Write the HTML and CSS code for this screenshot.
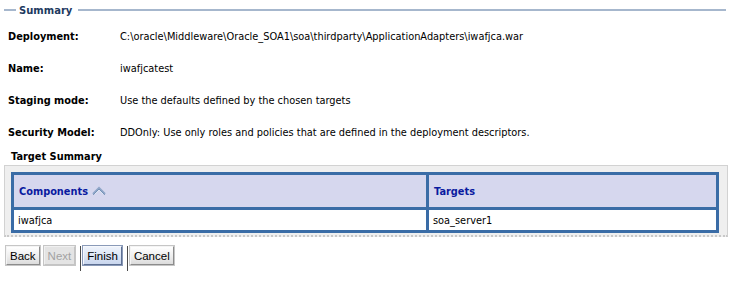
FILE: index.html
```html
<!DOCTYPE html>
<html>
<head>
<meta charset="utf-8">
<link rel="stylesheet" href="styles.css">
</head>
<body>
<div class="legend">
  <span class="rule short"></span>
  <span class="legend-text">Summary</span>
  <span class="rule long"></span>
</div>
<div class="details">
  <div class="label">Deployment:</div><div class="value">C:\oracle\Middleware\Oracle_SOA1\soa\thirdparty\ApplicationAdapters\iwafjca.war</div>
  <div class="label">Name:</div><div class="value">iwafjcatest</div>
  <div class="label">Staging mode:</div><div class="value">Use the defaults defined by the chosen targets</div>
  <div class="label">Security Model:</div><div class="value">DDOnly: Use only roles and policies that are defined in the deployment descriptors.</div>
</div>
<div class="subhead">Target Summary</div>
<div class="box">
  <table class="grid">
    <thead>
      <tr>
        <th class="c1">Components <svg class="sort" width="14" height="10" viewBox="0 0 14 10"><path d="M1 8 L7 2 L13 8" fill="none" stroke="#8fa6c8" stroke-width="2"/><path d="M3 8 L7 4 L11 8" fill="none" stroke="#dde6f3" stroke-width="1"/><path d="M1 9 L7 3 L13 9" fill="none" stroke="#5f7fa8" stroke-width="1" opacity="0.6"/></svg></th>
        <th class="c2">Targets</th>
      </tr>
    </thead>
    <tbody>
      <tr><td>iwafjca</td><td>soa_server1</td></tr>
    </tbody>
  </table>
</div>
<div class="buttons">
  <button class="btn">Back</button>
  <button class="btn disabled">Next</button>
  <span class="sep"></span>
  <button class="btn primary">Finish</button>
  <span class="sep"></span>
  <button class="btn">Cancel</button>
</div>
</body>
</html>
```
FILE: styles.css
```css
html, body {
  margin: 0;
  padding: 0;
  background: #ffffff;
}
body {
  font-family: "DejaVu Sans", Verdana, sans-serif;
  font-size: 9.8px;
  color: #000;
  padding: 0 4px 0 4px;
}
.legend {
  display: flex;
  align-items: center;
  height: 20px;
  width: 722px;
}
.rule {
  height: 2px;
  background: #a6b7cd;
}
.rule.short { width: 12px; }
.rule.long { flex: 1; }
.legend-text {
  font-weight: bold;
  font-size: 10px;
  color: #1e3a5f;
  padding: 0 6px 0 3px;
}
.details {
  display: grid;
  grid-template-columns: 112px 1fr;
  grid-auto-rows: 32px;
  align-items: center;
  padding-left: 4px;
}
.label {
  font-weight: bold;
}
.subhead {
  font-weight: bold;
  padding-left: 7px;
  height: 17px;
  line-height: 18px;
}
.box {
  width: 708px;
  background: #efefef;
  border: 1px solid #d2d2d2;
  border-bottom: 2px dotted #c8c8c8;
  padding: 6px 8px 2px 6px;
}
.grid {
  width: 100%;
  border-collapse: collapse;
  border: 3px solid #3a6ca6;
  background: #fff;
}
.grid th {
  background: #d6d7ee;
  color: #0a1aa0;
  font-weight: bold;
  text-align: left;
  height: 32px;
  padding: 0 5px;
  border: 3px solid #3a6ca6;
  border-top: 0;
}
.grid th.c1 { width: 402px; }
.sort { vertical-align: -1px; margin-left: 1px; }
.grid td {
  height: 20px;
  padding: 0 4px;
  border: 3px solid #3a6ca6;
}
.buttons {
  display: flex;
  align-items: flex-start;
  margin-top: 9px;
  padding-left: 2px;
}
.btn {
  font-family: "Liberation Sans", Arial, sans-serif;
  font-size: 11.5px;
  height: 19px;
  padding: 0 3px;
  margin: 0 4px 0 0;
  color: #000;
  border: 1px solid;
  border-color: #f4f4f4 #8c8c8c #8c8c8c #f4f4f4;
  outline: 1px solid #c6c6c6;
  outline-offset: 0;
  background: linear-gradient(#ffffff, #ececec 60%, #dcdcdc);
}
.btn.disabled {
  color: #a2a2a2;
  background: #e4e4e4;
  border-color: #f0f0f0 #c4c4c4 #c4c4c4 #f0f0f0;
}
.btn.primary {
  background: linear-gradient(#eef3fb, #d9e3f4 60%, #c9d6ee);
  border-color: #f6f8fc #5d6f93 #5d6f93 #f6f8fc;
  outline-color: #8a9ab8;
}
.sep {
  width: 1px;
  height: 25px;
  background: #4a4a4a;
  margin: 0 2px 0 1px;
}
```
